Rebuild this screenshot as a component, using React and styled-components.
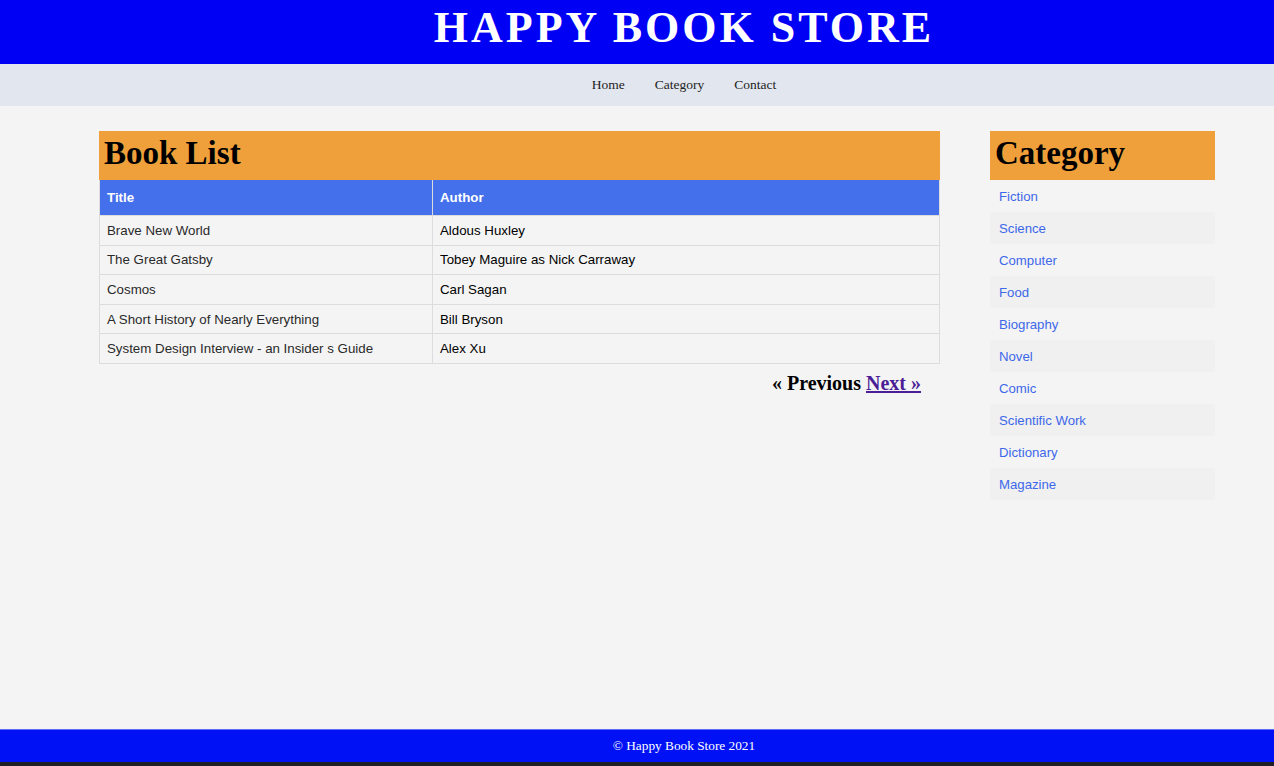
import React from 'react';
import styled, { createGlobalStyle } from 'styled-components';

const GlobalStyle = createGlobalStyle`
  html, body {
    margin: 0;
    padding: 0;
    background: #f4f4f4;
  }
  body {
    font-family: "Liberation Serif", "Times New Roman", serif;
  }
`;

const Page = styled.div`
  display: flex;
  flex-direction: column;
  min-height: 100vh;
`;

const Header = styled.header`
  height: 64px;
  background: #0000f5;
  display: flex;
  align-items: center;
  justify-content: center;
  padding-left: 94px;
`;

const SiteTitle = styled.h1`
  margin: 0;
  color: #fff;
  font-size: 44px;
  font-weight: bold;
  letter-spacing: 3px;
  line-height: 1;
  padding-bottom: 8px;
`;

const Nav = styled.nav`
  height: 42px;
  background: #e2e7ef;
  display: flex;
  align-items: center;
  justify-content: center;
  gap: 30px;
  padding-left: 94px;
`;

const NavLink = styled.a`
  color: #222;
  font-size: 13.5px;
  text-decoration: none;
`;

const Main = styled.main`
  flex: 1;
  display: grid;
  grid-template-columns: 841px 225px;
  column-gap: 50px;
  align-items: start;
  padding: 25px 59px 0 99px;
`;

const SectionTitle = styled.h2`
  margin: 0;
  height: 49px;
  background: #f0a03a;
  color: #000;
  font-size: 33px;
  font-weight: bold;
  line-height: 45px;
  padding-left: 5px;
  box-sizing: border-box;
`;

const Table = styled.table`
  width: 100%;
  border-collapse: collapse;
  font-family: "Liberation Sans", Arial, sans-serif;
  font-size: 13.3px;
`;

const Th = styled.th`
  background: #4470ec;
  color: #fff;
  text-align: left;
  font-weight: bold;
  height: 35px;
  padding: 0 7px;
  border: 1px solid #dcdcdc;
  border-top: none;
  width: ${p => p.$width || 'auto'};
`;

const Td = styled.td`
  height: 28.6px;
  padding: 0 7px;
  border: 1px solid #dcdcdc;
  color: ${p => (p.$muted ? '#2a2a2a' : '#000')};
`;

const Pager = styled.div`
  display: flex;
  justify-content: flex-end;
  gap: 5px;
  padding: 8px 19px 0 0;
  font-size: 20px;
  font-weight: bold;
`;

const PagerLink = styled.a`
  color: ${p => (p.$active ? '#4b1d96' : '#000')};
  text-decoration: ${p => (p.$active ? 'underline' : 'none')};
`;

const CategoryList = styled.ul`
  list-style: none;
  margin: 0;
  padding: 0;
  font-family: "Liberation Sans", Arial, sans-serif;
  font-size: 13.2px;
`;

const CategoryItem = styled.li`
  height: 32px;
  display: flex;
  align-items: center;
  padding-left: 9px;
  background: ${p => (p.$alt ? '#f0f0f0' : 'transparent')};
`;

const CategoryLink = styled.a`
  color: #3d68ea;
  text-decoration: none;
`;

const Footer = styled.footer`
  height: 32px;
  background: #0012f5;
  border-top: 1px solid #5a6cf5;
  border-bottom: 4px solid #1f1f24;
  box-sizing: content-box;
  color: #fff;
  font-size: 13.3px;
  display: flex;
  align-items: center;
  justify-content: center;
  padding-left: 94px;
`;

const books = [
  ['Brave New World', 'Aldous Huxley'],
  ['The Great Gatsby', 'Tobey Maguire as Nick Carraway'],
  ['Cosmos', 'Carl Sagan'],
  ['A Short History of Nearly Everything', 'Bill Bryson'],
  ['System Design Interview - an Insider s Guide', 'Alex Xu'],
];

const categories = [
  'Fiction',
  'Science',
  'Computer',
  'Food',
  'Biography',
  'Novel',
  'Comic',
  'Scientific Work',
  'Dictionary',
  'Magazine',
];

export default function App() {
  return (
    <Page>
      <GlobalStyle />
      <Header>
        <SiteTitle>HAPPY BOOK STORE</SiteTitle>
      </Header>
      <Nav>
        <NavLink href="#">Home</NavLink>
        <NavLink href="#">Category</NavLink>
        <NavLink href="#">Contact</NavLink>
      </Nav>
      <Main>
        <section>
          <SectionTitle>Book List</SectionTitle>
          <Table>
            <thead>
              <tr>
                <Th $width="318px">Title</Th>
                <Th>Author</Th>
              </tr>
            </thead>
            <tbody>
              {books.map(([title, author]) => (
                <tr key={title}>
                  <Td $muted>{title}</Td>
                  <Td>{author}</Td>
                </tr>
              ))}
            </tbody>
          </Table>
          <Pager>
            <PagerLink>« Previous</PagerLink>
            <PagerLink $active href="#">Next »</PagerLink>
          </Pager>
        </section>
        <aside>
          <SectionTitle>Category</SectionTitle>
          <CategoryList>
            {categories.map((c, i) => (
              <CategoryItem key={c} $alt={i % 2 === 1}>
                <CategoryLink href="#">{c}</CategoryLink>
              </CategoryItem>
            ))}
          </CategoryList>
        </aside>
      </Main>
      <Footer>© Happy Book Store 2021</Footer>
    </Page>
  );
}
